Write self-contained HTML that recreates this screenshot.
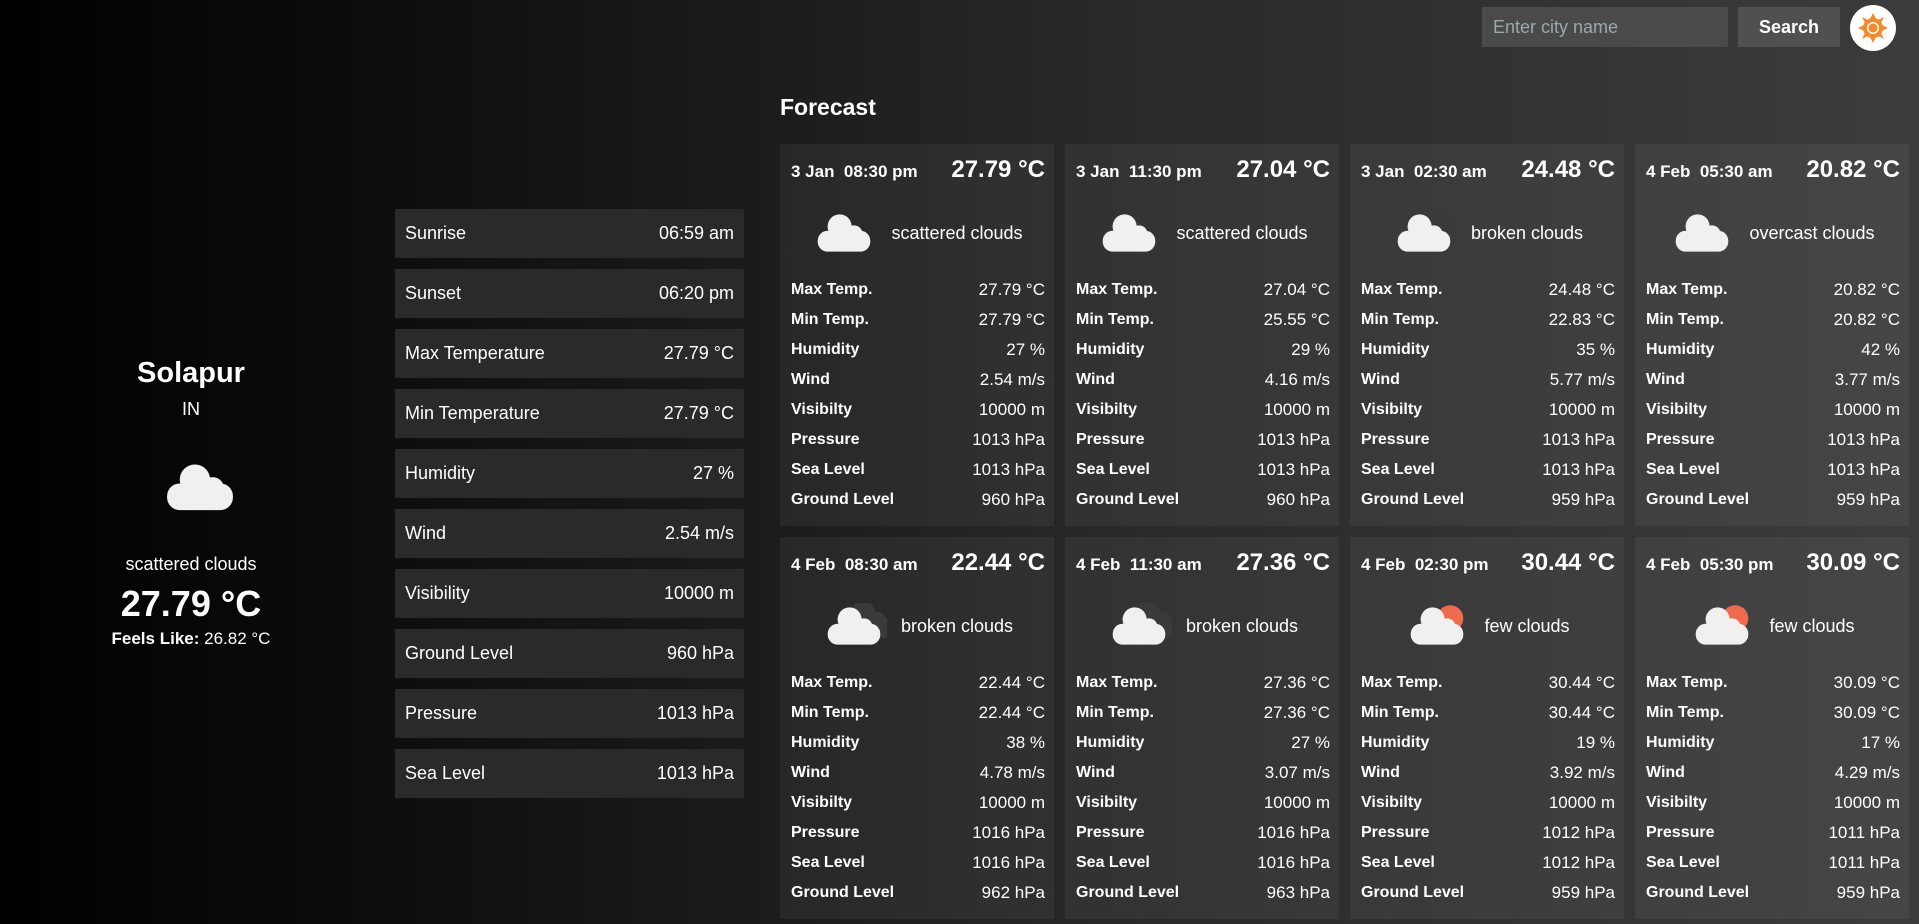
<!DOCTYPE html>
<html><head><meta charset="utf-8"><style>
*{box-sizing:border-box;margin:0;padding:0}
body{width:1919px;height:924px;overflow:hidden;background:linear-gradient(90deg,#000 0%,#111 25%,#2a2a2a 60%,#3c3c3c 100%);font-family:"Liberation Sans",sans-serif;color:#fff;position:relative}
.abs{position:absolute}
#inp{left:1482px;top:7px;width:246px;height:40px;background:#4a4a4a;color:#9aa;font-size:18px;padding:10px 11px}
#btn{left:1738px;top:7px;width:102px;height:40px;background:#505050;font-weight:bold;font-size:18px;text-align:center;line-height:40px}
#sun{left:1850px;top:5px;width:46px;height:46px;border-radius:50%;background:#fff}
.fc{left:780px;top:94px;font-size:23px;font-weight:bold}
.row{position:absolute;left:395px;width:349px;height:49px;background:#2a2a2a;font-size:18px;display:flex;justify-content:space-between;align-items:center;padding:0 10px}
.card{position:absolute;width:274px;height:382px;background:rgba(255,255,255,0.05)}
.hd{position:absolute;left:11px;right:9px;top:12px;display:flex;justify-content:space-between;align-items:baseline;font-weight:bold}
.hd .d{font-size:17px}.hd .t{font-size:24px}
.ic{position:absolute;left:0;right:0;top:66px;display:flex;justify-content:center;align-items:center;gap:14px;font-size:18px}
.st{position:absolute;left:11px;right:9px;display:flex;justify-content:space-between;font-size:17px;height:30px;align-items:center}
.st b{font-size:16px}
.city{left:0;width:382px;text-align:center}
</style></head><body>
<div class="abs" id="inp">Enter city name</div>
<div class="abs" id="btn">Search</div>
<div class="abs" id="sun"><svg width="46" height="46" viewBox="0 0 46 46"><g fill="#f58a2b"><circle cx="23" cy="23" r="10"/><polygon points="23,8 26,14 20,14"/><polygon points="23,38 26,32 20,32"/><polygon points="8,23 14,20 14,26"/><polygon points="38,23 32,20 32,26"/><polygon points="12,12 18,15 15,18"/><polygon points="34,34 28,31 31,28"/><polygon points="34,12 31,18 28,15"/><polygon points="12,34 15,28 18,31"/></g><circle cx="23" cy="23" r="6" fill="#fff"/><circle cx="23" cy="23" r="4.5" fill="#f58a2b"/></svg></div>
<div class="abs fc">Forecast</div>

<div class="abs city" style="top:357px;font-size:29px;font-weight:bold">Solapur</div>
<div class="abs city" style="top:399px;font-size:18px">IN</div>
<div class="abs" style="left:162px;top:460px"><svg width="76" height="52" viewBox="0 0 60 40"><g fill="#f0f0f0"><circle cx="26" cy="15" r="12"/><circle cx="40" cy="22" r="9"/><rect x="4" y="18" width="52" height="21" rx="10"/></g></svg></div>
<div class="abs city" style="top:554px;font-size:18px">scattered clouds</div>
<div class="abs city" style="top:583px;font-size:36px;font-weight:bold">27.79 °C</div>
<div class="abs city" style="top:629px;font-size:17px"><b>Feels Like:</b> 26.82 °C</div>

<div class="row" style="top:209px"><span>Sunrise</span><span>06:59 am</span></div>
<div class="row" style="top:269px"><span>Sunset</span><span>06:20 pm</span></div>
<div class="row" style="top:329px"><span>Max Temperature</span><span>27.79 °C</span></div>
<div class="row" style="top:389px"><span>Min Temperature</span><span>27.79 °C</span></div>
<div class="row" style="top:449px"><span>Humidity</span><span>27 %</span></div>
<div class="row" style="top:509px"><span>Wind</span><span>2.54 m/s</span></div>
<div class="row" style="top:569px"><span>Visibility</span><span>10000 m</span></div>
<div class="row" style="top:629px"><span>Ground Level</span><span>960 hPa</span></div>
<div class="row" style="top:689px"><span>Pressure</span><span>1013 hPa</span></div>
<div class="row" style="top:749px"><span>Sea Level</span><span>1013 hPa</span></div>

<svg width="0" height="0" style="position:absolute"><defs>
<g id="cl"><circle cx="26" cy="15" r="11"/><circle cx="39" cy="22" r="8"/><rect x="6" y="19" width="48" height="19" rx="9"/></g>
</defs></svg>

<div id="cards"></div>
<script>
var D=[
["3 Jan","08:30 pm","27.79","scattered clouds","s",["27.79 °C","27.79 °C","27 %","2.54 m/s","10000 m","1013 hPa","1013 hPa","960 hPa"]],
["3 Jan","11:30 pm","27.04","scattered clouds","s",["27.04 °C","25.55 °C","29 %","4.16 m/s","10000 m","1013 hPa","1013 hPa","960 hPa"]],
["3 Jan","02:30 am","24.48","broken clouds","b",["24.48 °C","22.83 °C","35 %","5.77 m/s","10000 m","1013 hPa","1013 hPa","959 hPa"]],
["4 Feb","05:30 am","20.82","overcast clouds","s",["20.82 °C","20.82 °C","42 %","3.77 m/s","10000 m","1013 hPa","1013 hPa","959 hPa"]],
["4 Feb","08:30 am","22.44","broken clouds","b",["22.44 °C","22.44 °C","38 %","4.78 m/s","10000 m","1016 hPa","1016 hPa","962 hPa"]],
["4 Feb","11:30 am","27.36","broken clouds","b",["27.36 °C","27.36 °C","27 %","3.07 m/s","10000 m","1016 hPa","1016 hPa","963 hPa"]],
["4 Feb","02:30 pm","30.44","few clouds","f",["30.44 °C","30.44 °C","19 %","3.92 m/s","10000 m","1012 hPa","1012 hPa","959 hPa"]],
["4 Feb","05:30 pm","30.09","few clouds","f",["30.09 °C","30.09 °C","17 %","4.29 m/s","10000 m","1011 hPa","1011 hPa","959 hPa"]]];
var L=["Max Temp.","Min Temp.","Humidity","Wind","Visibilty","Pressure","Sea Level","Ground Level"];
var h="";
D.forEach(function(c,i){
 var x=780+(i%4)*285, y=144+Math.floor(i/4)*393;
 var back="";
 if(c[4]=="b") back='<g fill="#3a3a3a" transform="translate(12,-6)"><use href="#cl"/></g>';
 if(c[4]=="f") back='<circle cx="42" cy="14" r="12" fill="#ee6c4d"/>';
 var ic='<svg width="66" height="46" viewBox="0 0 60 42">'+back+'<g fill="#f0f0f0"><use href="#cl"/></g></svg>';
 h+='<div class="card" style="left:'+x+'px;top:'+y+'px"><div class="hd"><span class="d">'+c[0]+'&nbsp; '+c[1]+'</span><span class="t">'+c[2]+' °C</span></div><div class="ic">'+ic+'<span>'+c[3]+'</span></div>';
 c[5].forEach(function(v,j){h+='<div class="st" style="top:'+(131+j*30)+'px"><b>'+L[j]+'</b><span>'+v+'</span></div>';});
 h+='</div>';
});
document.getElementById("cards").innerHTML=h;
</script>
</body></html>
